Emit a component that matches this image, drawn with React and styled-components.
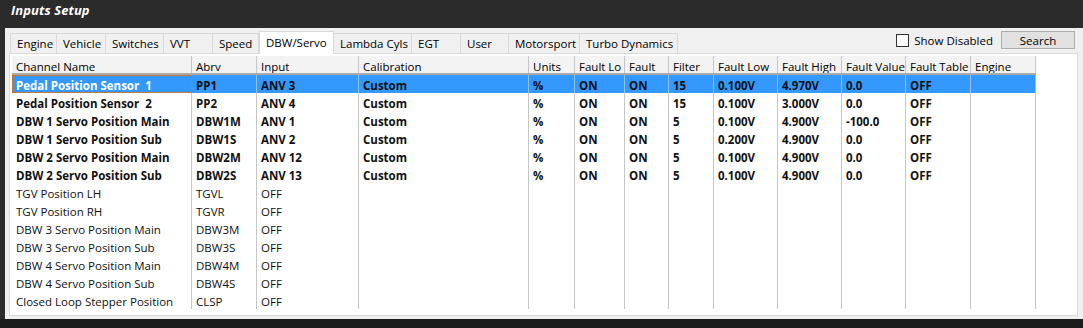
import React from 'react'
import styled, { createGlobalStyle } from 'styled-components'

const Global = createGlobalStyle`
  html, body {
    margin: 0;
    padding: 0;
    background: #1e1e1e;
  }
  body {
    font-family: 'Open Sans', 'Noto Sans', sans-serif;
    font-size: 11px;
    color: #000;
  }
`

const Window = styled.div`
  width: 1083px;
  height: 328px;
  display: flex;
  flex-direction: column;
  background: #2b2b2b;
  overflow: hidden;
`

const TitleBar = styled.div`
  height: 28px;
  flex: none;
  box-sizing: border-box;
  padding: 1px 0 0 11px;
  line-height: 18px;
  color: #fff;
  font-weight: 700;
  font-style: italic;
  font-size: 13px;
  letter-spacing: 0.1px;
`

const Body = styled.div`
  flex: 1;
  display: flex;
  padding-left: 5px;
  padding-bottom: 9px;
  background: linear-gradient(to bottom, #2b2b2b 0, #2b2b2b calc(100% - 9px), #1c1c1c calc(100% - 9px));
`

const Panel = styled.div`
  flex: 1;
  display: flex;
  flex-direction: column;
  background: #f0f0f0;
  padding: 3px 5px 3px 4px;
`

const Toolbar = styled.div`
  height: 22px;
  display: flex;
  align-items: flex-end;
  justify-content: space-between;
  padding-left: 1px;
`

const Tabs = styled.div`
  display: flex;
  align-items: flex-end;
  height: 100%;
`

const Tab = styled.div`
  box-sizing: border-box;
  width: ${p => p.$w}px;
  height: ${p => (p.$active ? 23 : 20)}px;
  padding: ${p => (p.$active ? '2px' : '1px')} 0 0 6px;
  border: 1px solid #d9d9d9;
  border-bottom: none;
  border-left-width: ${p => (p.$first || p.$active ? 1 : 0)}px;
  background: ${p => (p.$active ? '#fff' : '#f0f0f0')};
  font-size: 11.5px;
  line-height: 17px;
  white-space: nowrap;
  position: relative;
  z-index: ${p => (p.$active ? 1 : 0)};
  margin-bottom: ${p => (p.$active ? -1 : 0)}px;
`

const Controls = styled.div`
  display: flex;
  align-items: center;
  align-self: stretch;
  padding-right: 3px;
  padding-bottom: 4px;
`

const CheckLabel = styled.label`
  display: flex;
  align-items: center;
  gap: 5px;
  font-size: 11.5px;
  margin-right: 8px;
`

const Box = styled.span`
  width: 11px;
  height: 11px;
  border: 1px solid #333;
  background: #fff;
`

const Button = styled.button`
  width: 74px;
  height: 18px;
  padding: 0;
  border: 1px solid #adadad;
  background: #e1e1e1;
  font-family: inherit;
  font-size: 11.5px;
  color: #000;
  line-height: 15px;
`

const Grid = styled.div`
  flex: 1;
  background: #fff;
  border: 1px solid #d9d9d9;
  padding: 2px 0 0 2px;
  display: flex;
  flex-direction: column;
`

const cols = '180px 65px 102px 170px 46px 50px 44px 45px 64px 64px 64px 65px 65px'

const HeadRow = styled.div`
  display: grid;
  grid-template-columns: ${cols};
  height: 19px;
  box-sizing: border-box;
  border-bottom: 2px solid #aaaaaa;
  width: 1024px;
  background: #f3f3f3;
`

const HeadCell = styled.div`
  box-sizing: border-box;
  border-right: 1px solid #c6c6c6;
  padding: 3px 0 0 4px;
  line-height: 16px;
  font-size: 11.5px;
  white-space: nowrap;
  overflow: hidden;
`

const Row = styled.div`
  display: grid;
  grid-template-columns: ${cols};
  height: 18px;
  width: 1024px;
  background: ${p => (p.$selected ? '#3399ff' : 'transparent')};
  font-weight: ${p => (p.$bold ? 700 : 400)};
`

const Cell = styled.div`
  box-sizing: border-box;
  border-right: 1px solid ${p => (p.$selected ? '#8fc3f5' : '#c6c6c6')};
  padding: 3px 0 0 4px;
  line-height: 16px;
  font-size: 11.5px;
  white-space: pre;
  overflow: hidden;
  color: #111;
`

const FocusCell = styled(Cell)`
  color: #fff;
  outline: 1px solid #c8782f;
  outline-offset: -1px;
`

const Filler = styled.div`
  flex: 1;
  display: grid;
  grid-template-columns: ${cols};
  width: 1024px;
  margin-bottom: 6px;
`

const FillCell = styled.div`
  border-right: 1px solid #c6c6c6;
`

const tabs = [
  ['Engine', 47],
  ['Vehicle', 49],
  ['Switches', 58],
  ['VVT', 49],
  ['Speed', 46],
  ['DBW/Servo', 75],
  ['Lambda Cyls', 78],
  ['EGT', 49],
  ['User', 48],
  ['Motorsport', 71],
  ['Turbo Dynamics', 98],
]

const headers = [
  'Channel Name', 'Abrv', 'Input', 'Calibration', 'Units', 'Fault Lo', 'Fault',
  'Filter', 'Fault Low', 'Fault High', 'Fault Value', 'Fault Table', 'Engine',
]

const on = (name, abrv, input, filter, low, high, value) =>
  [name, abrv, input, 'Custom', '%', 'ON', 'ON', filter, low, high, value, 'OFF', '']
const off = (name, abrv) => [name, abrv, 'OFF', '', '', '', '', '', '', '', '', '', '']

const rows = [
  on('Pedal Position Sensor  1', 'PP1', 'ANV 3', '15', '0.100V', '4.970V', '0.0'),
  on('Pedal Position Sensor  2', 'PP2', 'ANV 4', '15', '0.100V', '3.000V', '0.0'),
  on('DBW 1 Servo Position Main', 'DBW1M', 'ANV 1', '5', '0.100V', '4.900V', '-100.0'),
  on('DBW 1 Servo Position Sub', 'DBW1S', 'ANV 2', '5', '0.200V', '4.900V', '0.0'),
  on('DBW 2 Servo Position Main', 'DBW2M', 'ANV 12', '5', '0.100V', '4.900V', '0.0'),
  on('DBW 2 Servo Position Sub', 'DBW2S', 'ANV 13', '5', '0.100V', '4.900V', '0.0'),
  off('TGV Position LH', 'TGVL'),
  off('TGV Position RH', 'TGVR'),
  off('DBW 3 Servo Position Main', 'DBW3M'),
  off('DBW 3 Servo Position Sub', 'DBW3S'),
  off('DBW 4 Servo Position Main', 'DBW4M'),
  off('DBW 4 Servo Position Sub', 'DBW4S'),
  off('Closed Loop Stepper Position', 'CLSP'),
]

export default function App() {
  return (
    <Window>
      <Global />
      <TitleBar>Inputs Setup</TitleBar>
      <Body>
        <Panel>
          <Toolbar>
            <Tabs>
              {tabs.map(([label, w], i) => (
                <Tab key={label} $w={w} $first={i === 0} $active={label === 'DBW/Servo'}>
                  {label}
                </Tab>
              ))}
            </Tabs>
            <Controls>
              <CheckLabel>
                <Box />
                Show Disabled
              </CheckLabel>
              <Button>Search</Button>
            </Controls>
          </Toolbar>
          <Grid>
            <HeadRow>
              {headers.map(h => (
                <HeadCell key={h}>{h}</HeadCell>
              ))}
            </HeadRow>
            {rows.map((r, ri) => {
              const selected = ri === 0
              return (
                <Row key={r[0]} $selected={selected} $bold={ri < 6}>
                  {r.map((v, ci) =>
                    selected && ci === 0 ? (
                      <FocusCell key={ci} $selected>{v}</FocusCell>
                    ) : (
                      <Cell key={ci} $selected={selected}>{v}</Cell>
                    )
                  )}
                </Row>
              )
            })}
            <Filler>
              {headers.map(h => (
                <FillCell key={h} />
              ))}
            </Filler>
          </Grid>
        </Panel>
      </Body>
    </Window>
  )
}
